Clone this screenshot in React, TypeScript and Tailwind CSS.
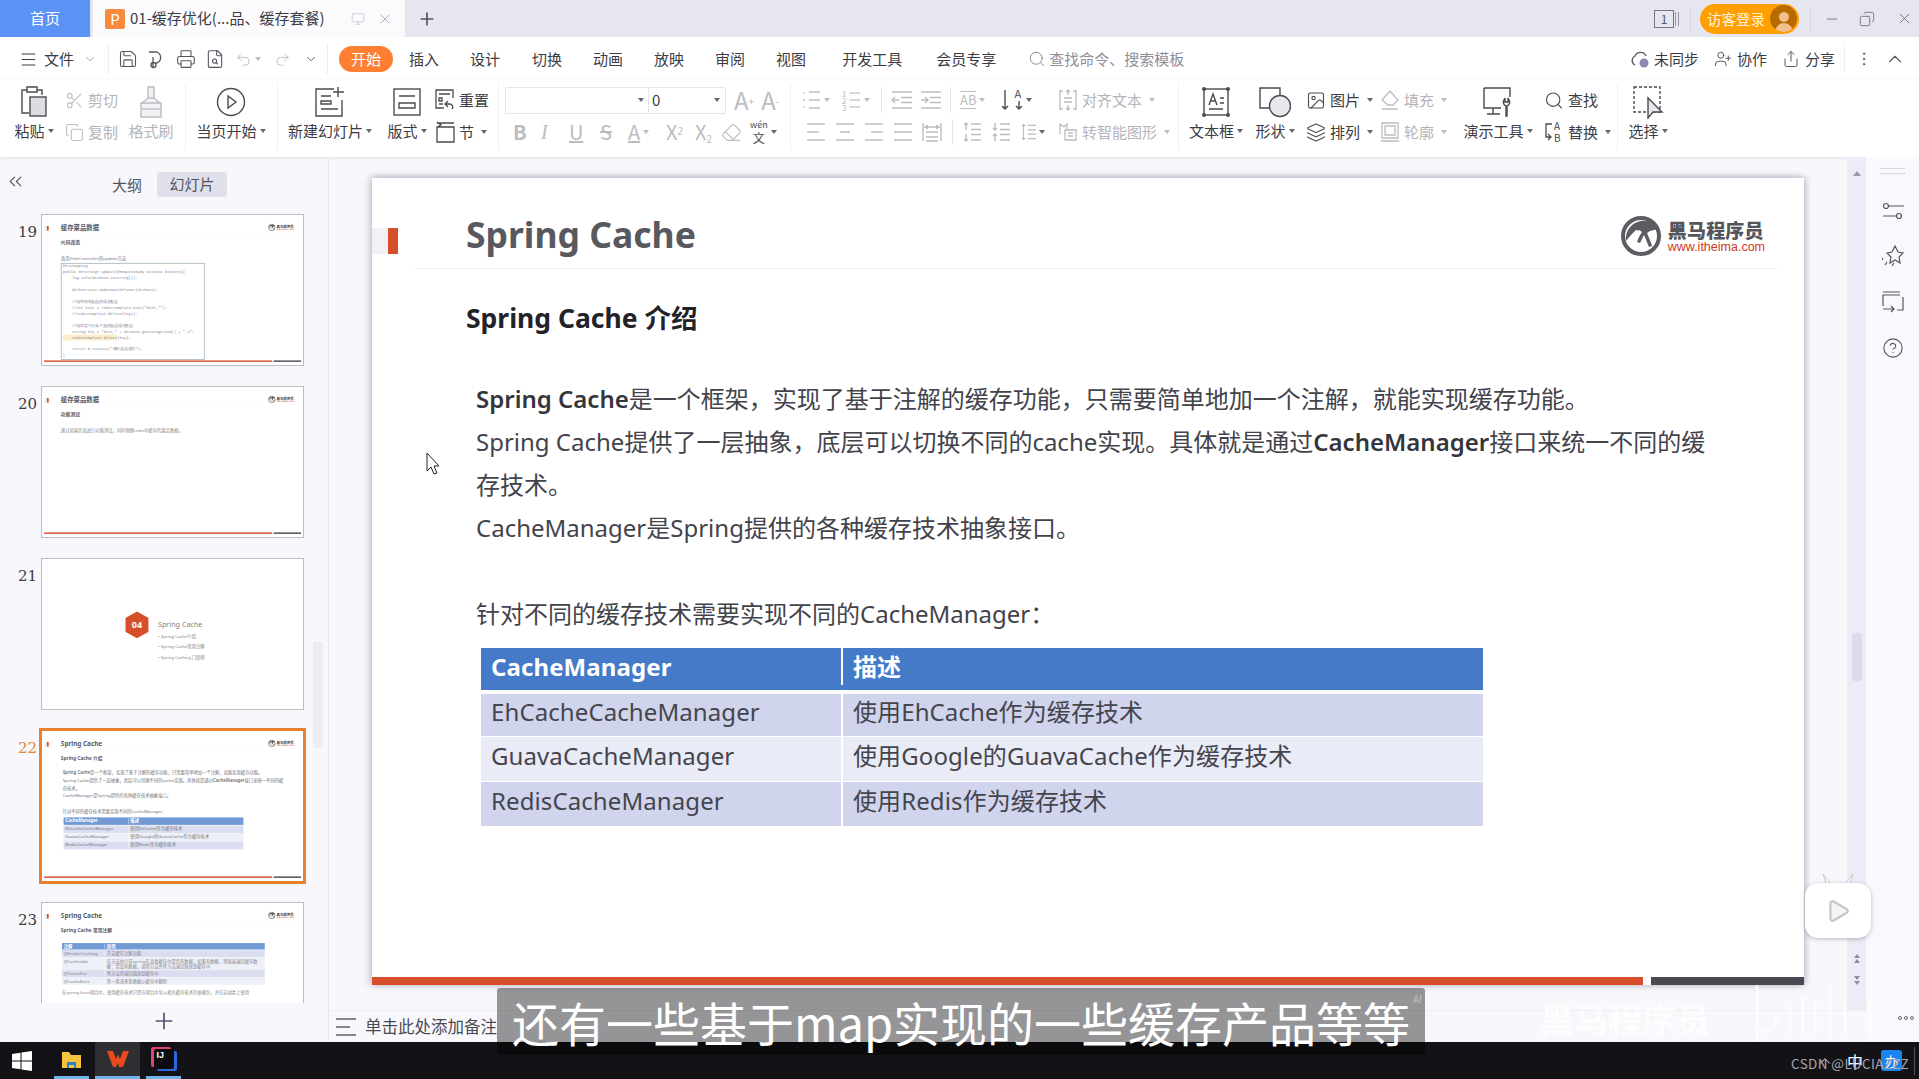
import { ReactNode } from 'react';
import {
  ChevronDown,
  ChevronUp,
  Copy,
  Eraser,
  Image,
  Layers,
  Menu,
  Minus,
  Monitor,
  MoreVertical,
  Play,
  Plus,
  Printer,
  Redo2,
  Save,
  Scissors,
  Search,
  Share,
  Undo2,
  UserPlus,
  X,
  ChevronsLeft,
  HelpCircle,
  FileSearch,
} from 'lucide-react';

const dark = '#4a4a52';
const muted = '#bcbcc2';

function Caret({ light }: { light?: boolean }) {
  return (
    <span
      className={`ml-[3px] inline-block border-x-[3px] border-t-[4px] border-x-transparent ${
        light ? 'border-t-[#bcbcc2]' : 'border-t-[#666670]'
      }`}
    />
  );
}

function Divider({ className = '' }: { className?: string }) {
  return <div className={`h-[66px] w-px shrink-0 bg-[#f0f0f4] ${className}`} />;
}

function BigTool({
  icon,
  label,
  className,
  disabled,
  caret = true,
}: {
  icon: ReactNode;
  label: string;
  className: string;
  disabled?: boolean;
  caret?: boolean;
}) {
  return (
    <div className={`flex shrink-0 flex-col items-center ${className}`}>
      <div className="flex h-[36px] items-center justify-center">{icon}</div>
      <div
        className={`flex h-[22px] items-center whitespace-nowrap text-[15px] ${
          disabled ? 'text-[#b4b4ba]' : 'text-[#3c3c44]'
        }`}
      >
        {label}
        {caret && <Caret />}
      </div>
    </div>
  );
}

function SmallTool({
  icon,
  label,
  disabled,
  caret,
}: {
  icon: ReactNode;
  label: string;
  disabled?: boolean;
  caret?: boolean;
}) {
  return (
    <div
      className={`flex h-[32px] items-center gap-[4px] whitespace-nowrap text-[15px] ${
        disabled ? 'text-[#b4b4ba]' : 'text-[#3c3c44]'
      }`}
    >
      <span className="flex w-[20px] justify-center">{icon}</span>
      <span>{label}</span>
      {caret && <Caret light={disabled} />}
    </div>
  );
}

function Lines({ rows, color = muted, w = 20 }: { rows: number[][]; color?: string; w?: number }) {
  const step = 16 / Math.max(rows.length - 1, 1);
  return (
    <svg width={w} height="20" viewBox={`0 0 ${w} 20`} stroke={color} strokeWidth="1.4" fill="none">
      {rows.map((r, i) => (
        <line key={i} x1={r[0]} x2={r[1]} y1={2 + i * step} y2={2 + i * step} />
      ))}
    </svg>
  );
}

function FontGroup() {
  return (
    <div className="ml-[6px] w-[285px] shrink-0">
      <div className="flex h-[32px] items-center">
        <div className="flex h-[27px] w-[221px] rounded-[2px] border border-[#e6e6ea]">
          <div className="flex w-[143px] items-center justify-end border-r border-[#e6e6ea] pr-[4px]">
            <Caret />
          </div>
          <div className="flex flex-1 items-center justify-between px-[3px] pr-[5px] text-[15px] text-[#3c3c44]">
            0
            <Caret />
          </div>
        </div>
        <span className="ml-[8px] text-[24px] leading-none text-[#bcbcc2]">
          A<sup className="text-[10px]">+</sup>
        </span>
        <span className="ml-[7px] text-[24px] leading-none text-[#bcbcc2]">
          A<sup className="text-[10px]">-</sup>
        </span>
      </div>
      <div className="flex h-[32px] items-center text-[#bcbcc2]">
        <span className="ml-[8px] w-[24px] text-[20px] font-bold">B</span>
        <span className="ml-[4px] w-[22px] font-['Liberation_Serif',serif] text-[20px] italic">I</span>
        <span className="ml-[6px] w-[22px] text-[20px] underline">U</span>
        <span className="ml-[9px] w-[22px] text-[20px] line-through">S</span>
        <span className="ml-[6px] flex w-[24px] items-center text-[20px] underline">
          A
          <Caret light />
        </span>
        <span className="ml-[14px] w-[27px] text-[20px]">
          X<sup className="text-[10px]">2</sup>
        </span>
        <span className="ml-[2px] w-[26px] text-[20px]">
          X<sub className="text-[10px]">2</sub>
        </span>
        <Eraser size={21} strokeWidth={1.3} />
        <span className="ml-[8px] flex flex-col items-center text-[#4a4a52]">
          <span className="text-[9px] leading-[12px]">wén</span>
          <span className="text-[12px] leading-[14px]">文</span>
        </span>
        <Caret />
      </div>
    </div>
  );
}

function ParaGroup() {
  return (
    <div className="ml-[12px] w-[375px] shrink-0">
      <div className="flex h-[32px] items-center">
        <div className="flex w-[27px] items-center">
          <Lines w={20} rows={[[0, 2], [0, 2], [0, 2]]} />
          <span className="-ml-[15px]">
            <Lines w={15} rows={[[3, 14], [3, 14], [3, 14]]} />
          </span>
          <Caret light />
        </div>
        <div className="ml-[12px] flex w-[28px] items-center">
          <span className="w-[8px] text-[8px] leading-[7px] text-[#bcbcc2]">1 2 3</span>
          <Lines w={14} rows={[[1, 13], [1, 13], [1, 13]]} />
          <Caret light />
        </div>
        <div className="ml-[11px] h-[26px] w-px bg-[#e6e6ea]" />
        <div className="ml-[9px] w-[21px]">
          <svg width="21" height="20" viewBox="0 0 21 20" fill="none" stroke={muted} strokeWidth="1.4">
            <path d="M1 2h20M10 7.500h11M10 12.500h11M1 18h20M8 10H1M4 7l-3 3 3 3" />
          </svg>
        </div>
        <div className="ml-[8px] w-[21px]">
          <svg width="21" height="20" viewBox="0 0 21 20" fill="none" stroke={muted} strokeWidth="1.4">
            <path d="M1 2h20M10 7.500h11M10 12.500h11M1 18h20M1 10h7M5 7l3 3-3 3" />
          </svg>
        </div>
        <div className="ml-[9px] h-[26px] w-px bg-[#e6e6ea]" />
        <div className="ml-[9px] flex w-[30px] items-center text-[13px] text-[#bcbcc2]">
          <span className="border-y border-[#bcbcc2] leading-[16px]">AB</span>
          <Caret light />
        </div>
        <div className="ml-[11px] flex w-[29px] items-center">
          <svg className="overflow-visible" width="22" height="24" viewBox="0 0 22 24" fill="none" stroke={dark} strokeWidth="1.4">
            <path d="M4 2v19M1 18l3 3 3-3M18 13v8M15 18l3 3 3-3" />
            <text x="13.500" y="10" fontSize="11" fill={dark} stroke="none">A</text>
          </svg>
          <Caret />
        </div>
        <div className="ml-[28px]">
          <SmallTool
            disabled
            caret
            label="对齐文本"
            icon={
              <svg width="20" height="22" viewBox="0 0 20 22" fill="none" stroke={muted} strokeWidth="1.3">
                <path d="M5 2H2v18h3M15 2h3v18h-3M6 9h8M6 13h8M10 1v5M8 3l2-2 2 2M10 16v5M8 19l2 2 2-2" />
              </svg>
            }
          />
        </div>
      </div>
      <div className="flex h-[32px] items-center">
        <div className="ml-[4px] w-[18px]">
          <Lines w={18} rows={[[0, 18], [0, 12], [0, 18]]} />
        </div>
        <div className="ml-[11px] w-[19px]">
          <Lines w={18} rows={[[0, 18], [4, 14], [0, 18]]} />
        </div>
        <div className="ml-[10px] w-[18px]">
          <Lines w={18} rows={[[0, 18], [6, 18], [0, 18]]} />
        </div>
        <div className="ml-[11px] w-[18px]">
          <Lines w={18} rows={[[0, 18], [0, 18], [0, 18]]} />
        </div>
        <div className="ml-[10px] w-[20px]">
          <svg width="20" height="20" viewBox="0 0 20 20" fill="none" stroke={muted} strokeWidth="1.4">
            <path d="M1 1v18M19 1v18M4 10h12M4 15h12M4 19h12M3 5h14M6 3L3 5l3 2M14 3l3 2-3 2" />
          </svg>
        </div>
        <div className="ml-[10px] h-[26px] w-px bg-[#e6e6ea]" />
        <div className="ml-[10px] w-[18px]">
          <svg width="18" height="20" viewBox="0 0 18 20" fill="none" stroke={muted} strokeWidth="1.4">
            <path d="M8 2h10M8 7.500h10M8 12.500h10M8 18h10M3 1v7M1 3l2-2 2 2M3 12v7M1 17l2 2 2-2" />
          </svg>
        </div>
        <div className="ml-[11px] w-[18px]">
          <svg width="18" height="20" viewBox="0 0 18 20" fill="none" stroke={muted} strokeWidth="1.4">
            <path d="M8 2h10M8 7.500h10M8 12.500h10M8 18h10M3 1v7M1 6l2 2 2-2M3 12v7M1 14l2-2 2 2" />
          </svg>
        </div>
        <div className="ml-[11px] flex w-[24px] items-center">
          <svg width="18" height="20" viewBox="0 0 18 20" fill="none" stroke={muted} strokeWidth="1.4">
            <path d="M8 2h10M8 7.500h10M8 12.500h10M8 18h10M3 1v18M1 3l2-2 2 2M1 17l2 2 2-2" />
          </svg>
          <Caret />
        </div>
        <div className="ml-[13px]">
          <SmallTool
            disabled
            caret
            label="转智能图形"
            icon={
              <svg width="20" height="20" viewBox="0 0 20 20" fill="none" stroke={muted} strokeWidth="1.3">
                <path d="M2 12V2l4 3 3-3v5M7 8h11v10H7zM10 11h5M10 14h5" />
              </svg>
            }
          />
        </div>
      </div>
    </div>
  );
}

function TwoRow({ className, children }: { className: string; children: ReactNode }) {
  return <div className={`shrink-0 ${className}`}>{children}</div>;
}

function Ribbon() {
  const ic = { strokeWidth: 1.3, color: dark };
  const off = { strokeWidth: 1.3, color: muted };
  return (
    <div className="flex h-[77px] items-start bg-white pl-[13px] pt-[4px] shadow-[0_1px_3px_rgba(60,60,90,0.15)]">
      <BigTool
        className="w-[42px]"
        label="粘贴"
        icon={
          <svg width="28" height="32" viewBox="0 0 28 32" fill="none" stroke={dark} strokeWidth="1.4">
            <path d="M7 4H2v23h7M7 1h10v5H7zM17 4h5v5" />
            <rect x="10" y="11" width="16" height="19" fill="#dcdce2" />
          </svg>
        }
      />
      <TwoRow className="ml-[9px] w-[58px]">
        <SmallTool disabled label="剪切" icon={<Scissors size={19} {...off} />} />
        <SmallTool disabled label="复制" icon={<Copy size={19} {...off} />} />
      </TwoRow>
      <BigTool
        disabled
        caret={false}
        className="ml-[6px] w-[46px]"
        label="格式刷"
        icon={
          <svg width="24" height="32" viewBox="0 0 24 32" fill="#f2f2f4" stroke={muted} strokeWidth="1.4">
            <path d="M9 1h6v11H9zM9 12l-6 5h18l-6-5M2 17h20v14H2z" />
            <path d="M2 23h20" />
          </svg>
        }
      />
      <Divider className="ml-[11px]" />
      <BigTool
        className="ml-[10px] w-[70px]"
        label="当页开始"
        icon={
          <svg width="30" height="30" viewBox="0 0 30 30" fill="none" stroke={dark} strokeWidth="1.4">
            <circle cx="15" cy="15" r="13.5" />
            <path d="M12 9l8 6-8 6z" />
          </svg>
        }
      />
      <Divider className="ml-[11px]" />
      <BigTool
        className="ml-[10px] w-[84px]"
        label="新建幻灯片"
        icon={
          <svg width="32" height="32" viewBox="0 0 32 32" fill="none" stroke={dark} strokeWidth="1.4">
            <path d="M20 3H2v27h26V14M24 1v10M19 6h11M7 10h10M7 15h10v3H7zM7 23h17" />
          </svg>
        }
      />
      <BigTool
        className="ml-[13px] w-[44px]"
        label="版式"
        icon={
          <svg width="28" height="30" viewBox="0 0 28 30" fill="none" stroke={dark} strokeWidth="1.4">
            <rect x="1" y="2" width="26" height="26" />
            <path d="M6 9h16M6 16h16v5H6z" />
          </svg>
        }
      />
      <TwoRow className="ml-[6px] w-[62px]">
        <SmallTool
          label="重置"
          icon={
            <svg width="20" height="22" viewBox="0 0 20 22" fill="none" stroke={dark} strokeWidth="1.3">
              <path d="M18 9V1H1v18h8M4 5h11M4 9h3v3H4zM4 15h4M13 12l-3 3 3 3M10 15h5a3 3 0 0 1 2 5" />
            </svg>
          }
        />
        <SmallTool
          caret
          label="节"
          icon={
            <svg width="20" height="22" viewBox="0 0 20 22" fill="none" stroke={dark} strokeWidth="1.3">
              <path d="M2 6h17v15H2zM2 2h17M2 1l4 3-4 2" />
            </svg>
          }
        />
      </TwoRow>
      <Divider className="ml-[1px]" />
      <FontGroup />
      <Divider />
      <ParaGroup />
      <Divider />
      <BigTool
        className="ml-[8px] w-[58px]"
        label="文本框"
        icon={
          <svg width="28" height="30" viewBox="0 0 28 30" fill="none" stroke={dark} strokeWidth="1.4">
            <rect x="2" y="2" width="24" height="26" />
            <path d="M7 18l4-11 4 11M8 14h6M7 22h14M18 11h4M18 16h4" />
            <g fill={dark} stroke="none">
              <circle cx="2" cy="2" r="2" />
              <circle cx="26" cy="2" r="2" />
              <circle cx="2" cy="28" r="2" />
              <circle cx="26" cy="28" r="2" />
            </g>
          </svg>
        }
      />
      <BigTool
        className="ml-[8px] w-[44px]"
        label="形状"
        icon={
          <svg width="32" height="32" viewBox="0 0 32 32" fill="none" stroke={dark} strokeWidth="1.4">
            <path d="M16 22H1V2h20v8" />
            <circle cx="21" cy="20" r="10.5" fill="#e8e8ec" />
          </svg>
        }
      />
      <TwoRow className="ml-[9px] w-[68px]">
        <SmallTool caret label="图片" icon={<Image size={21} {...ic} />} />
        <SmallTool caret label="排列" icon={<Layers size={21} {...ic} />} />
      </TwoRow>
      <TwoRow className="ml-[6px] w-[68px]">
        <SmallTool
          disabled
          caret
          label="填充"
          icon={
            <svg width="20" height="22" viewBox="0 0 20 22" fill="none" stroke={muted} strokeWidth="1.3">
              <path d="M10 2L2 11l6 5h5l5-5zM2 20h16" />
            </svg>
          }
        />
        <SmallTool
          disabled
          caret
          label="轮廓"
          icon={
            <svg width="20" height="22" viewBox="0 0 20 22" fill="none" stroke={muted} strokeWidth="1.3">
              <path d="M2 2h16v15H2zM5 5h10v9H5zM1 20h18" />
            </svg>
          }
        />
      </TwoRow>
      <BigTool
        className="ml-[12px] w-[76px]"
        label="演示工具"
        icon={
          <svg width="32" height="32" viewBox="0 0 32 32" fill="none" stroke={dark} strokeWidth="1.4">
            <path d="M2 2h26v9M2 2v20h17M11 22v6M5 28h13" />
            <path d="M24 30V20a4 4 0 0 1-2-6l1-2v4h3v-4l1 2a4 4 0 0 1-2 6v10z" />
          </svg>
        }
      />
      <TwoRow className="ml-[8px] w-[70px]">
        <SmallTool label="查找" icon={<Search size={21} {...ic} />} />
        <SmallTool
          caret
          label="替换"
          icon={
            <svg className="overflow-visible" width="20" height="24" viewBox="0 0 20 24" fill="none" stroke={dark} strokeWidth="1.3">
              <path d="M8 4H2v13h4M4 14l3 3-3 3" />
              <text x="10" y="10" fontSize="10" fill={dark} stroke="none">A</text>
              <text x="10" y="22" fontSize="10" fill={dark} stroke="none">B</text>
            </svg>
          }
        />
      </TwoRow>
      <Divider className="ml-[3px]" />
      <BigTool
        className="ml-[7px] w-[46px]"
        label="选择"
        icon={
          <svg width="32" height="34" viewBox="0 0 32 34" fill="none" stroke={dark} strokeWidth="1.4">
            <rect x="2" y="2" width="26" height="25" strokeDasharray="3 2" />
            <path d="M16 13v20l5-6h9z" fill="#e8e8ec" />
          </svg>
        }
      />
    </div>
  );
}

function MenuBar() {
  const tabs = [
    ['插入', 'ml-[16px]'],
    ['设计', 'ml-[31px]'],
    ['切换', 'ml-[32px]'],
    ['动画', 'ml-[31px]'],
    ['放映', 'ml-[31px]'],
    ['审阅', 'ml-[31px]'],
    ['视图', 'ml-[31px]'],
    ['开发工具', 'ml-[36px]'],
    ['会员专享', 'ml-[34px]'],
  ];
  const q = { strokeWidth: 1.3, color: '#55555e', size: 20 };
  return (
    <div className="flex h-[43px] items-center bg-white pl-[19px] pt-[1px] text-[15px] text-[#3c3c44]">
      <Menu size={19} strokeWidth={1.3} />
      <span className="ml-[6px]">文件</span>
      <ChevronDown size={14} strokeWidth={1.3} className="ml-[9px] text-[#8a8a92]" />
      <div className="ml-[11px] h-[30px] w-px bg-[#ececf0]" />
      <Save className="ml-[9px]" {...q} />
      <svg className="ml-[10px]" width="19" height="20" viewBox="0 0 19 20" fill="none" stroke="#55555e" strokeWidth="1.3">
        <path d="M1 3h8a6 6 0 0 1 0 11H8M5 8v11M3 16a2.500 2.500 0 1 0 5 0 2.500 2.500 0 1 0-5 0" />
      </svg>
      <Printer className="ml-[9px]" {...q} />
      <FileSearch className="ml-[9px]" {...q} />
      <Undo2 className="ml-[10px]" size={17} strokeWidth={1.3} color={muted} />
      <Caret light />
      <Redo2 className="ml-[13px]" size={17} strokeWidth={1.3} color={muted} />
      <ChevronDown className="ml-[13px]" size={14} strokeWidth={1.6} color="#55555e" />
      <div className="ml-[9px] h-[30px] w-px bg-[#ececf0]" />
      <span className="ml-[11px] flex h-[26px] w-[54px] items-center justify-center rounded-full bg-[#ff7f32] text-white">
        开始
      </span>
      {tabs.map(([t, m]) => (
        <span key={t} className={m}>
          {t}
        </span>
      ))}
      <Search className="ml-[32px]" size={18} strokeWidth={1.3} color="#8a8a96" />
      <span className="ml-[3px] text-[#8e8e9a]">查找命令、搜索模板</span>
      <div className="ml-auto flex items-center pr-[13px]">
        <svg width="22" height="20" viewBox="0 0 22 20" fill="none" stroke="#55555e" strokeWidth="1.3">
          <path d="M6 16a5 5 0 0 1 0-9 6 6 0 0 1 11 0" />
          <circle cx="15" cy="14" r="4.500" fill="#8a8ab0" stroke="none" />
        </svg>
        <span className="ml-[3px]">未同步</span>
        <UserPlus className="ml-[15px]" size={18} strokeWidth={1.3} color="#55555e" />
        <span className="ml-[5px]">协作</span>
        <Share className="ml-[15px]" size={18} strokeWidth={1.3} color="#55555e" />
        <span className="ml-[5px]">分享</span>
        <div className="ml-[9px] h-[26px] w-px bg-[#ececf0]" />
        <MoreVertical className="ml-[10px]" size={18} strokeWidth={1.3} color="#55555e" />
        <ChevronUp className="ml-[11px]" size={22} strokeWidth={1.2} color="#55555e" />
      </div>
    </div>
  );
}

function TitleBar() {
  return (
    <div className="flex h-[37px] items-stretch bg-[#e6e6f0] text-[15px]">
      <div className="flex w-[90px] items-center justify-center bg-[#5b92f6] text-white">首页</div>
      <div className="ml-[3px] flex w-[312px] items-center bg-[#fbfbfd] pl-[12px] text-[#3c3c44]">
        <span className="flex h-[20px] w-[20px] items-center justify-center rounded-[2px] bg-[#f78a3c] text-[15px] leading-none text-white">
          P
        </span>
        <span className="ml-[5px] whitespace-nowrap">01-缓存优化(...品、缓存套餐)</span>
        <Monitor className="ml-[26px]" size={14} strokeWidth={1.3} color="#c4c4cc" />
        <X className="ml-[12px]" size={16} strokeWidth={1.2} color="#9c9ca6" />
      </div>
      <div className="ml-[12px] flex items-center">
        <Plus size={20} strokeWidth={2} color="#55555e" />
      </div>
      <div className="ml-auto flex items-center">
        <span className="flex h-[18px] w-[20px] items-center justify-center border border-[#77777f] text-[12px] text-[#55555e]">
          1
        </span>
        <span className="ml-[1px] h-[14px] w-[4px] border-x border-[#99999f]" />
        <div className="ml-[11px] h-[26px] w-px bg-[#d8d8e2]" />
        <div className="ml-[9px] flex h-[30px] w-[99px] items-center rounded-full bg-[#ffa000] pl-[7px] text-[14.5px] text-[#fff3dc]">
          访客登录
          <span className="ml-[5px] flex h-[27px] w-[27px] flex-col items-center justify-end overflow-hidden rounded-full bg-[#b86a00]">
            <span className="h-[10px] w-[10px] rounded-full bg-[#f2c08c]" />
            <span className="mt-[1px] h-[9px] w-[18px] rounded-t-full bg-[#f2c08c]" />
          </span>
        </div>
        <div className="ml-[11px] h-[26px] w-px bg-[#d8d8e2]" />
        <Minus className="ml-[13px]" size={16} strokeWidth={1.2} color="#66666e" />
        <Copy className="ml-[19px] -scale-x-100" size={16} strokeWidth={1.2} color="#66666e" />
        <X className="ml-[21px]" size={17} strokeWidth={1.2} color="#66666e" />
        <span className="w-[6px]" />
      </div>
    </div>
  );
}

function Logo() {
  return (
    <div className="flex items-center font-['Noto_Sans_CJK_SC',sans-serif]">
      <svg width="45" height="42" viewBox="0 0 45 42">
        <circle cx="23" cy="21" r="18" fill="none" stroke="#5c5c62" strokeWidth="4" />
        <path d="M8 26c-1-14 10-22 22-20 4 1 8 4 10 8l-8 2-3 2c2 5 4 9 5 13l-3 1-5-12-4 8-3-1 4-11-5-1-6 6z" fill="#5c5c62" />
        <path d="M15 24l6-9 3 2-5 8z" fill="#fff" />
      </svg>
      <div className="ml-[5px] flex flex-col">
        <span className="text-[19px] font-black leading-[22px] tracking-[0.2px] text-[#55555b]">黑马程序员</span>
        <span className="font-['Liberation_Sans',sans-serif] text-[12.500px] font-medium leading-[13px] text-[#d03a22]">
          www.itheima.com
        </span>
      </div>
    </div>
  );
}

function SlideFrame({ title, children }: { title: string; children: ReactNode }) {
  return (
    <div className="flex h-[807px] w-[1432px] shrink-0 flex-col bg-white font-['Noto_Sans','Noto_Sans_CJK_SC',sans-serif]">
      <div className="flex h-[91px] shrink-0">
        <div className="flex h-[76px] w-[40px] shrink-0 items-end">
          <span className="h-[26px] w-[16px] bg-[#f2f2f5]" />
          <span className="h-[26px] w-[10px] bg-[#d64f2a]" />
        </div>
        <div className="mr-[24px] flex flex-1 items-center justify-between border-b border-[#f3f3f6] pl-[54px] pr-[15px]">
          <span className="pt-[24px] text-[35.500px] font-bold leading-none text-[#58585f]">{title}</span>
          <span className="pt-[26px]">
            <Logo />
          </span>
        </div>
      </div>
      <div className="slide-body min-h-0 flex-1 overflow-hidden">{children}</div>
      <div className="flex h-[8px] shrink-0 gap-[8px]">
        <div className="w-[1271px] bg-[#d64f2a]" />
        <div className="flex-1 bg-[#4a4a52]" />
      </div>
    </div>
  );
}

function CacheSlide() {
  const rows = [
    { name: 'EhCacheCacheManager', desc: '使用EhCache作为缓存技术', cls: 'bg-[#d0d4ec] h-[42px]' },
    { name: 'GuavaCacheManager', desc: '使用Google的GuavaCache作为缓存技术', cls: 'bg-[#e9ebf6] h-[44px]' },
    { name: 'RedisCacheManager', desc: '使用Redis作为缓存技术', cls: 'bg-[#d0d4ec] h-[44px]' },
  ];
  return (
    <SlideFrame title="Spring Cache">
      <div className="pl-[94px]">
        <div className="mt-[29px] text-[26.500px] font-bold leading-[40px] text-[#222228]">Spring Cache 介绍</div>
        <div className="ml-[10px] mt-[39px] whitespace-nowrap text-[24px] leading-[43px] text-[#43434b]">
          <div>
            <b className="font-semibold text-[#35353c]">Spring Cache</b>是一个框架，实现了基于注解的缓存功能，只需要简单地加一个注解，就能实现缓存功能。
          </div>
          <div>
            Spring Cache提供了一层抽象，底层可以切换不同的cache实现。具体就是通过<b className="font-semibold text-[#35353c]">CacheManager</b>接口来统一不同的缓
          </div>
          <div>存技术。</div>
          <div>CacheManager是Spring提供的各种缓存技术抽象接口。</div>
          <div>&nbsp;</div>
          <div>针对不同的缓存技术需要实现不同的CacheManager：</div>
        </div>
        <div className="ml-[15px] mt-[13px] w-[1002px] text-[24px] tracking-[0.1px] text-[#45454d]">
          <div className="mb-[3px] flex h-[43px] border-b border-white bg-[#447ac8] pb-[5px] font-bold text-white">
            <div className="flex w-[362px] items-center border-r-2 border-white pl-[10px]">CacheManager</div>
            <div className="flex flex-1 items-center pl-[10px]">描述</div>
          </div>
          {rows.map((r) => (
            <div key={r.name} className={`mb-px flex ${r.cls}`}>
              <div className="flex w-[362px] items-center border-r-2 border-white pb-[7px] pl-[10px]">{r.name}</div>
              <div className="flex flex-1 items-center pb-[7px] pl-[10px]">{r.desc}</div>
            </div>
          ))}
        </div>
      </div>
    </SlideFrame>
  );
}

function CodeSlide() {
  const code = [
    '@PutMapping',
    'public R<String> update(@RequestBody DishDto dishDto){',
    '    log.info(dishDto.toString());',
    '',
    '    dishService.updateWithFlavor(dishDto);',
    '',
    '    //清理所有菜品的缓存数据',
    '    //Set keys = redisTemplate.keys("dish_*");',
    '    //redisTemplate.delete(keys);',
    '',
    '    //清理某个分类下面的菜品缓存数据',
    '    String key = "dish_" + dishDto.getCategoryId() + "_1";',
    '    redisTemplate.delete(key);',
    '',
    '    return R.success("修改菜品成功");',
    '}',
  ];
  return (
    <SlideFrame title="缓存菜品数据">
      <div className="pl-[94px]">
        <div className="mt-[29px] text-[26.500px] font-bold leading-[40px] text-[#222228]">代码改造</div>
        <div className="mt-[48px] text-[24px] leading-[40px] text-[#43434b]">改造DishController的update方法</div>
        <div className="mt-[8px] h-[540px] w-[800px] overflow-hidden whitespace-pre border-[3px] border-[#4a6a80] px-[8px] font-['Liberation_Mono',monospace] text-[21px] leading-[33px] text-[#5a5a78]">
          {code.map((c, i) => (
            <div key={i} className={i === 12 ? 'w-[300px] bg-[#fde9b8]' : ''}>
              {c || ' '}
            </div>
          ))}
        </div>
      </div>
    </SlideFrame>
  );
}

function TestSlide() {
  return (
    <SlideFrame title="缓存菜品数据">
      <div className="pl-[94px]">
        <div className="mt-[29px] text-[26.500px] font-bold leading-[40px] text-[#222228]">功能测试</div>
        <div className="mt-[48px] text-[24px] leading-[40px] text-[#5a5a62]">
          通过前端页面进行功能测试，同时观察redis中缓存的菜品数据。
        </div>
      </div>
    </SlideFrame>
  );
}

function SectionSlide() {
  return (
    <div className="flex h-[807px] w-[1432px] bg-white pl-[453px] pt-[281px] font-['Noto_Sans','Noto_Sans_CJK_SC',sans-serif]">
      <svg width="130" height="150" viewBox="0 0 130 150">
        <path d="M65 0l65 37v76l-65 37-65-37V37z" fill="#d64f2a" />
        <text x="65" y="90" fontSize="50" fontWeight="700" fill="#fff" textAnchor="middle">
          04
        </text>
      </svg>
      <div className="slide-body ml-[52px] pt-[40px] text-[#55555c]">
        <div className="text-[40px] leading-[60px]">Spring Cache</div>
        <div className="mt-[10px] text-[24px] leading-[58px]">
          <div>• Spring Cache介绍</div>
          <div>• Spring Cache常用注解</div>
          <div>• Spring Cache入门案例</div>
        </div>
      </div>
    </div>
  );
}

function AnnotationSlide() {
  const rows = [
    ['@EnableCaching', '开启缓存注解功能'],
    ['@Cacheable', '在方法执行前spring先查看缓存中是否有数据，如果有数据，则直接返回缓存数据；若没有数据，调用方法并将方法返回值放到缓存中'],
    ['@CachePut', '将方法的返回值放到缓存中'],
    ['@CacheEvict', '将一条或多条数据从缓存中删除'],
  ];
  return (
    <SlideFrame title="Spring Cache">
      <div className="pl-[94px]">
        <div className="mt-[29px] text-[26.500px] font-bold leading-[40px] text-[#222228]">Spring Cache 常用注解</div>
        <div className="ml-[6px] mt-[52px] w-[1130px] text-[24px] leading-[30px] text-[#55555c]">
          <div className="mb-[3px] flex bg-[#447ac8] py-[3px] font-bold text-white">
            <div className="w-[240px] border-r-2 border-white pl-[10px]">注解</div>
            <div className="flex-1 pl-[10px]">说明</div>
          </div>
          {rows.map((r, i) => (
            <div key={r[0]} className={`mb-px flex py-[5px] ${i % 2 ? 'bg-[#e9ebf6]' : 'bg-[#d0d4ec]'}`}>
              <div className="w-[240px] shrink-0 border-r-2 border-white pl-[10px]">{r[0]}</div>
              <div className="flex-1 pl-[10px]">{r[1]}</div>
            </div>
          ))}
          <div className="mt-[30px]">在spring boot项目中，使用缓存技术只需在项目中导入相关缓存技术的依赖包，并在启动类上使用</div>
        </div>
      </div>
    </SlideFrame>
  );
}

function Thumb({ n, active, children }: { n: number; active?: boolean; children: ReactNode }) {
  return (
    <div className="flex shrink-0 items-start">
      <div
        className={`w-[37px] pt-[6px] text-right font-['DejaVu_Serif',serif] text-[15px] leading-[24px] ${
          active ? 'text-[#e0853a]' : 'text-[#3c3c44]'
        }`}
      >
        {n}
      </div>
      <div
        className={`ml-[4px] h-[152px] w-[263px] shrink-0 overflow-hidden border bg-white p-[2px] ${
          active ? 'border-[#e8812e] outline-[2px] outline-[#e8812e]' : 'border-[#bcbcc6]'
        }`}
      >
        <div className="origin-top-left scale-[0.1795] [&_.slide-body]:opacity-75">{children}</div>
      </div>
    </div>
  );
}

function Sidebar() {
  return (
    <div className="flex w-[329px] shrink-0 flex-col border-r border-[#e8e8ee]">
      <div className="flex h-[57px] shrink-0 items-start pl-[5px] pt-[15px] text-[15px] text-[#55555e]">
        <ChevronsLeft size={21} strokeWidth={1.3} className="mt-[-1px]" />
        <span className="ml-[86px] pt-[2px]">大纲</span>
        <span className="ml-[15px] flex h-[25px] w-[70px] items-center justify-center rounded-[3px] bg-[#e0e0ea]">
          幻灯片
        </span>
      </div>
      <div className="relative flex h-[789px] shrink-0 flex-col gap-[20px] overflow-hidden">
        <Thumb n={19}>
          <CodeSlide />
        </Thumb>
        <Thumb n={20}>
          <TestSlide />
        </Thumb>
        <Thumb n={21}>
          <SectionSlide />
        </Thumb>
        <Thumb n={22} active>
          <CacheSlide />
        </Thumb>
        <Thumb n={23}>
          <AnnotationSlide />
        </Thumb>
        <div className="absolute left-[313px] top-[428px] h-[106px] w-[10px] rounded-b-[4px] bg-[#ececf3]" />
      </div>
      <div className="flex flex-1 items-center justify-center pb-[3px]">
        <Plus size={26} strokeWidth={1.6} color="#55557a" />
      </div>
    </div>
  );
}

function RightPanel() {
  return (
    <div className="flex w-[53px] shrink-0 flex-col items-center bg-[#f9f9fd]">
      <div className="mt-[11px] h-[6px] w-[25px] border-y border-[#d8d8de]" />
      <svg className="mt-[28px]" width="22" height="18" viewBox="0 0 22 18" fill="none" stroke="#55555e" strokeWidth="1.2">
        <circle cx="4" cy="4" r="2.500" />
        <path d="M7 4h15M1 14h13" />
        <circle cx="17" cy="14" r="2.500" />
      </svg>
      <svg className="mt-[25px]" width="22" height="22" viewBox="0 0 22 22" fill="none" stroke="#55555e" strokeWidth="1.2">
        <path d="M13 1l3 6 5 1-4 4 1 6-5-3-5 3 1-6-4-4 5-1zM1 13l-1 2M5 17l-2 3M12 18l-2 3" />
      </svg>
      <svg className="mt-[24px]" width="22" height="22" viewBox="0 0 22 22" fill="none" stroke="#55555e" strokeWidth="1.2">
        <path d="M1 15V4h17M1 1h17M21 6v13h-6M1 18h11M9 15l3 3-3 3" />
      </svg>
      <HelpCircle className="mt-[24px]" size={22} strokeWidth={1.2} color="#55555e" />
      <div className="mt-auto flex gap-[2px] self-end pb-[22px] pr-[5px]">
        <span className="h-[4px] w-[4px] rounded-full border border-[#66666e]" />
        <span className="h-[4px] w-[4px] rounded-full border border-[#66666e]" />
        <span className="h-[4px] w-[4px] rounded-full border border-[#66666e]" />
      </div>
    </div>
  );
}

function Scrollbar() {
  return (
    <div className="flex w-[19px] shrink-0 flex-col items-center bg-[#ececf7] pt-[14px] pb-[25px]">
      <span className="border-x-[4px] border-b-[5px] border-x-transparent border-b-[#9a9aa4]" />
      <div className="mt-[457px] h-[48px] w-[10px] rounded-[3px] bg-[#dcdce8]" />
      <div className="mt-auto flex flex-col items-center gap-[1px]">
        <span className="border-x-[3px] border-b-[4px] border-x-transparent border-b-[#8e8e98]" />
        <span className="border-x-[3px] border-b-[4px] border-x-transparent border-b-[#8e8e98]" />
        <span className="mt-[12px] border-x-[3px] border-t-[4px] border-x-transparent border-t-[#8e8e98]" />
        <span className="border-x-[3px] border-t-[4px] border-x-transparent border-t-[#8e8e98]" />
      </div>
    </div>
  );
}

function Taskbar() {
  return (
    <div className="flex h-[37px] shrink-0 items-stretch bg-[#131217] pl-[12px]">
      <div className="flex w-[20px] items-center">
        <svg width="20" height="20" viewBox="0 0 20 20" fill="#fff">
          <path d="M0 3l8.500-1.200v7.700H0zM9.500 1.600L20 0v9.500H9.500zM0 10.500h8.500v7.700L0 17zM9.500 10.500H20V20L9.500 18.400z" />
        </svg>
      </div>
      <div className="ml-[22px] flex w-[35px] items-center justify-center border-b-[3px] border-[#6fb3e8]">
        <svg width="19" height="17" viewBox="0 0 19 17">
          <path d="M0 1h7l2 3h10v13H0z" fill="#f5c33d" />
          <path d="M5 11h9v6h-2v-3H7v3H5z" fill="#2f7fd0" />
        </svg>
      </div>
      <div className="ml-[6px] flex w-[45px] items-center justify-center border-b-[3px] border-[#6fb3e8] bg-[#2f2f33]">
        <svg width="22" height="18" viewBox="0 0 22 18">
          <path d="M0 1h6l3 8 2-5 2 5 3-8h6l-6 16h-4l-1-4-2 4H6z" fill="#e8491f" />
        </svg>
      </div>
      <div className="ml-[6px] flex w-[35px] items-center justify-center border-b-[3px] border-[#6fb3e8]">
        <span className="flex h-[20px] w-[20px] items-start rounded-[2px] bg-[#0c0c10] pl-[3px] font-['Liberation_Sans',sans-serif] text-[9px] font-bold leading-[12px] text-white shadow-[-3px_-2px_0_#e0436c,3px_2px_0_#2f66e0]">
          IJ
        </span>
      </div>
      <div className="ml-auto flex items-center pr-[4px] text-white">
        <ChevronUp size={18} strokeWidth={1.2} />
        <span className="ml-[13px] font-['Noto_Sans_CJK_SC',sans-serif] text-[16px]">中</span>
        <span className="ml-[18px] flex h-[21px] w-[21px] items-center justify-center rounded-[3px] bg-[#1c84f0] text-[13px]">
          办
        </span>
        <span className="ml-[12px] h-[28px] w-px bg-[#55555c]" />
      </div>
    </div>
  );
}

export default function App() {
  return (
    <div className="relative flex h-[1079px] w-[1919px] flex-col overflow-hidden bg-[#f8f8fc] font-['Noto_Sans_CJK_SC','Noto_Sans',sans-serif]">
      <TitleBar />
      <MenuBar />
      <Ribbon />
      <div className="flex min-h-0 flex-1">
        <Sidebar />
        <div className="flex min-w-0 flex-1 flex-col">
          <div className="flex min-h-0 flex-1">
            <div className="min-w-0 flex-1 pl-[43px] pt-[21px]">
              <div className="w-[1432px] shadow-[-3px_0_8px_rgba(90,90,120,0.25),3px_0_6px_rgba(90,90,120,0.2),0_-2px_6px_rgba(90,90,120,0.15)]">
                <CacheSlide />
              </div>
            </div>
            <Scrollbar />
          </div>
          <div className="flex h-[32px] shrink-0 items-center border-t border-[#eeeef3] pl-[7px] text-[16.500px] text-[#4a4a55]">
            <Lines color="#55555e" w={20} rows={[[0, 20], [0, 14], [0, 20]]} />
            <span className="ml-[9px] whitespace-nowrap">单击此处添加备注</span>
          </div>
        </div>
        <RightPanel />
      </div>
      <Taskbar />

      {/* stuff burned into the recording, sits over the app */}
      <div className="absolute left-[1540px] top-[1000px] text-[34px] font-bold leading-[38px] text-white/75">黑马程序员</div>
      <svg className="absolute left-[1745px] top-[975px]" width="135" height="70" viewBox="0 0 135 70" fill="none" stroke="#fff" strokeOpacity="0.75" strokeWidth="3">
        <path d="M12 10v56M12 55c12 4 18-4 20-12M45 30v28M58 22v36M70 25v34M85 10v55M100 30v30M125 25v35" />
      </svg>
      <div className="absolute left-[497px] top-[988px] flex h-[67px] w-[928px] items-center justify-center rounded-[3px] bg-black/40 pt-[2px] text-[47px] text-white">
        还有一些基于map实现的一些缓存产品等等
        <span className="absolute right-[3px] top-[3px] text-[10px] text-white/40">AI</span>
      </div>
      <div className="absolute left-[1805px] top-[874px] flex flex-col items-center">
        <svg width="36" height="12" viewBox="0 0 36 12" fill="#fff" stroke="#c8c8d0" strokeWidth="1">
          <path d="M3 0l8 10-4 2zM33 0l-8 10 4 2z" />
        </svg>
        <div className="-mt-[3px] flex h-[55px] w-[66px] items-center justify-center rounded-[13px] bg-white shadow-[0_1px_4px_rgba(60,60,80,0.35)]">
          <Play size={26} strokeWidth={2} color="#c4c4ca" fill="#f4f4f6" />
        </div>
      </div>
      <svg className="absolute left-[426px] top-[452px]" width="14" height="24" viewBox="0 0 14 24">
        <path d="M1 1v18l4-4 3 7 3-1-3-7h5z" fill="#fff" stroke="#222" strokeWidth="1" />
      </svg>
      <div className="absolute left-[1791px] top-[1053px] whitespace-nowrap text-[13.500px] tracking-[0.4px] text-[#a8a8b0]">CSDN @LUCIAZZZ</div>
    </div>
  );
}
